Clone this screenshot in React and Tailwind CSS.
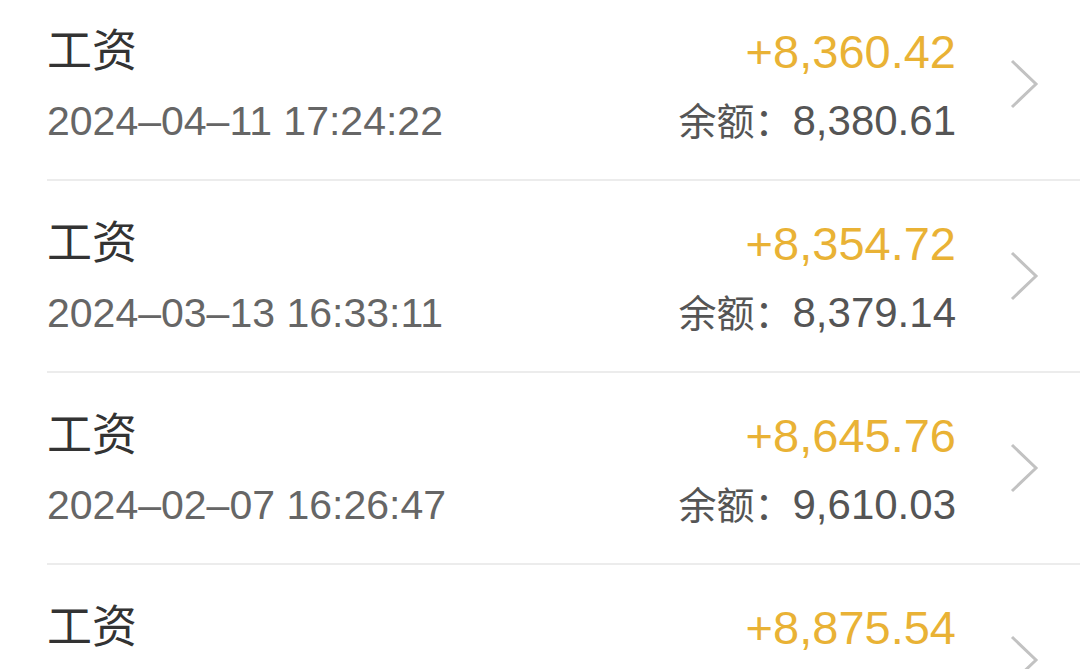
import React from "react";

const records = [
  { title: "工资", time: "2024–04–11 17:24:22", amount: "+8,360.42", balance: "8,380.61" },
  { title: "工资", time: "2024–03–13 16:33:11", amount: "+8,354.72", balance: "8,379.14" },
  { title: "工资", time: "2024–02–07 16:26:47", amount: "+8,645.76", balance: "9,610.03" },
  { title: "工资", time: "", amount: "+8,875.54", balance: "" },
];

function Chevron() {
  return (
    <svg width="30" height="50" viewBox="0 0 30 50" className="shrink-0">
      <path d="M3 2 L27 25 L3 48" fill="none" stroke="#c2c2c2" strokeWidth="3" />
    </svg>
  );
}

function App() {
  return (
    <div
      className="w-[1080px] h-[669px] overflow-hidden bg-white"
      style={{ fontFamily: '"Liberation Sans", "Noto Sans CJK SC", sans-serif' }}
    >
      <div className="-mt-[11px]">
        {records.map((r, i) => (
          <div
            key={i}
            className="ml-[47px] h-[192px] flex items-center border-b-2 border-[#ececec] pr-[41px]"
          >
            <div className="flex flex-col flex-1">
              <span className="text-[45px] leading-[56px] text-[#333333]">{r.title}</span>
              <span className="h-[48px] text-[41px] leading-[48px] mt-[17px] text-[#666666]">{r.time}</span>
            </div>
            <div className="flex flex-col items-end">
              <span className="text-[47px] leading-[56px] text-[#e9b235]">{r.amount}</span>
              <span className="h-[48px] text-[38px] leading-[48px] mt-[17px] text-[#555555]">
                {r.balance && (
                  <>
                    余额：<span className="text-[42px]">{r.balance}</span>
                  </>
                )}
              </span>
            </div>
            <div className="ml-[53px]">
              <Chevron />
            </div>
          </div>
        ))}
      </div>
    </div>
  );
}

export default App;
